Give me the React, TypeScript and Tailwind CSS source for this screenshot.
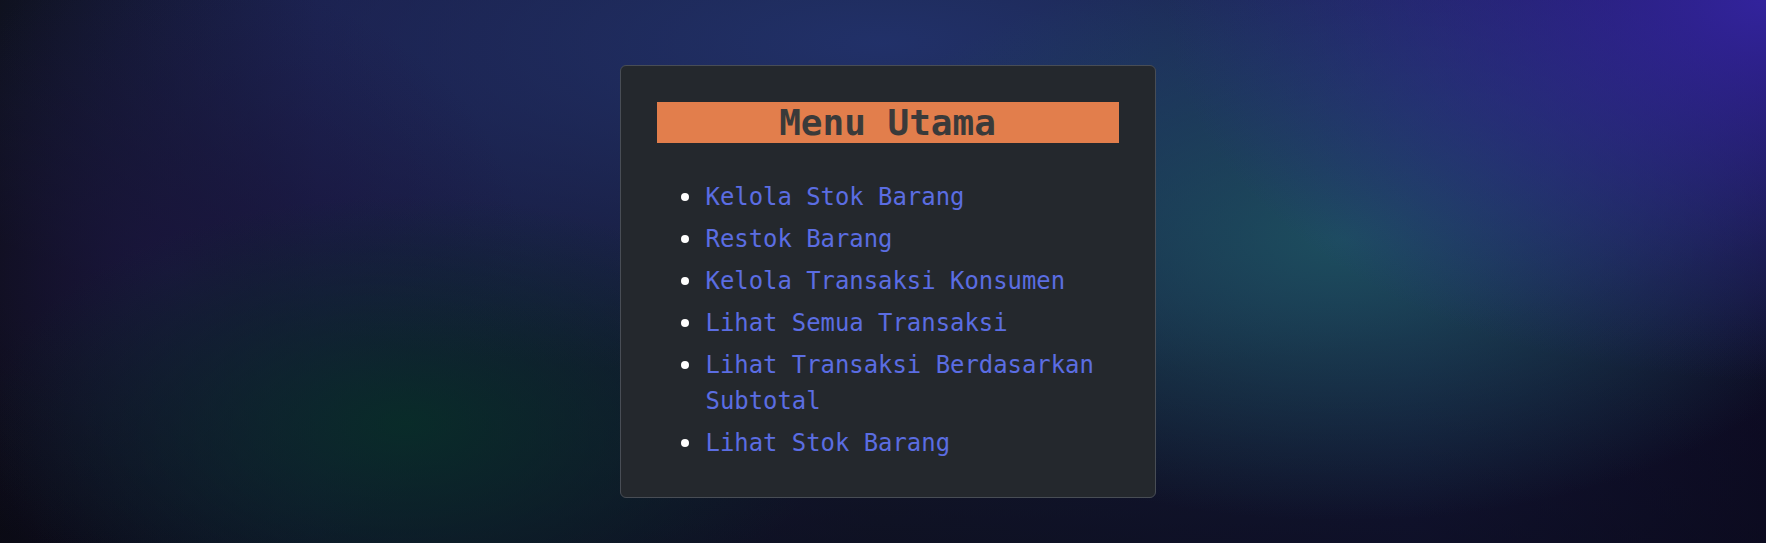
const menuItems = [
  "Kelola Stok Barang",
  "Restok Barang",
  "Kelola Transaksi Konsumen",
  "Lihat Semua Transaksi",
  "Lihat Transaksi Berdasarkan Subtotal",
  "Lihat Stok Barang",
];

export default function App() {
  return (
    <div className="min-h-[543px] w-full overflow-hidden bg-[radial-gradient(ellipse_34%_70%_at_100%_0%,rgba(52,36,162,0.95),transparent_100%),radial-gradient(ellipse_30%_52%_at_76%_44%,rgba(29,80,96,0.95),transparent_100%),radial-gradient(ellipse_24%_42%_at_23%_78%,rgba(8,46,40,0.9),transparent_100%),radial-gradient(ellipse_20%_55%_at_10%_50%,rgba(26,22,62,0.9),transparent_100%),radial-gradient(ellipse_62%_62%_at_50%_8%,rgba(34,50,108,0.95),transparent_100%),linear-gradient(to_bottom,transparent_55%,rgba(10,10,26,0.55)_100%),linear-gradient(to_right,#0b0b0f_0%,#17163c_18%,#141a2e_50%,#14183a_80%,#0e0c26_100%)] pl-[9px] pt-[65px] font-['DejaVu_Sans_Mono',monospace]">
      <div className="mx-auto w-[536px] rounded-md border border-[#484d55] bg-[#24282d] p-9">
        <h1 className="bg-[#e27e4c] text-center text-[36px] font-bold leading-[41px] text-[#3a3a3a]">
          Menu Utama
        </h1>
        <ul className="mt-9 flex flex-col gap-[6px] pl-6">
          {menuItems.map((item) => (
            <li key={item} className="flex items-start gap-[17px]">
              <span className="mt-[14px] size-2 shrink-0 rounded-full bg-white" />
              <a href="#" className="text-[23.9px] leading-9 text-[#5b6de2]">
                {item}
              </a>
            </li>
          ))}
        </ul>
      </div>
    </div>
  );
}
